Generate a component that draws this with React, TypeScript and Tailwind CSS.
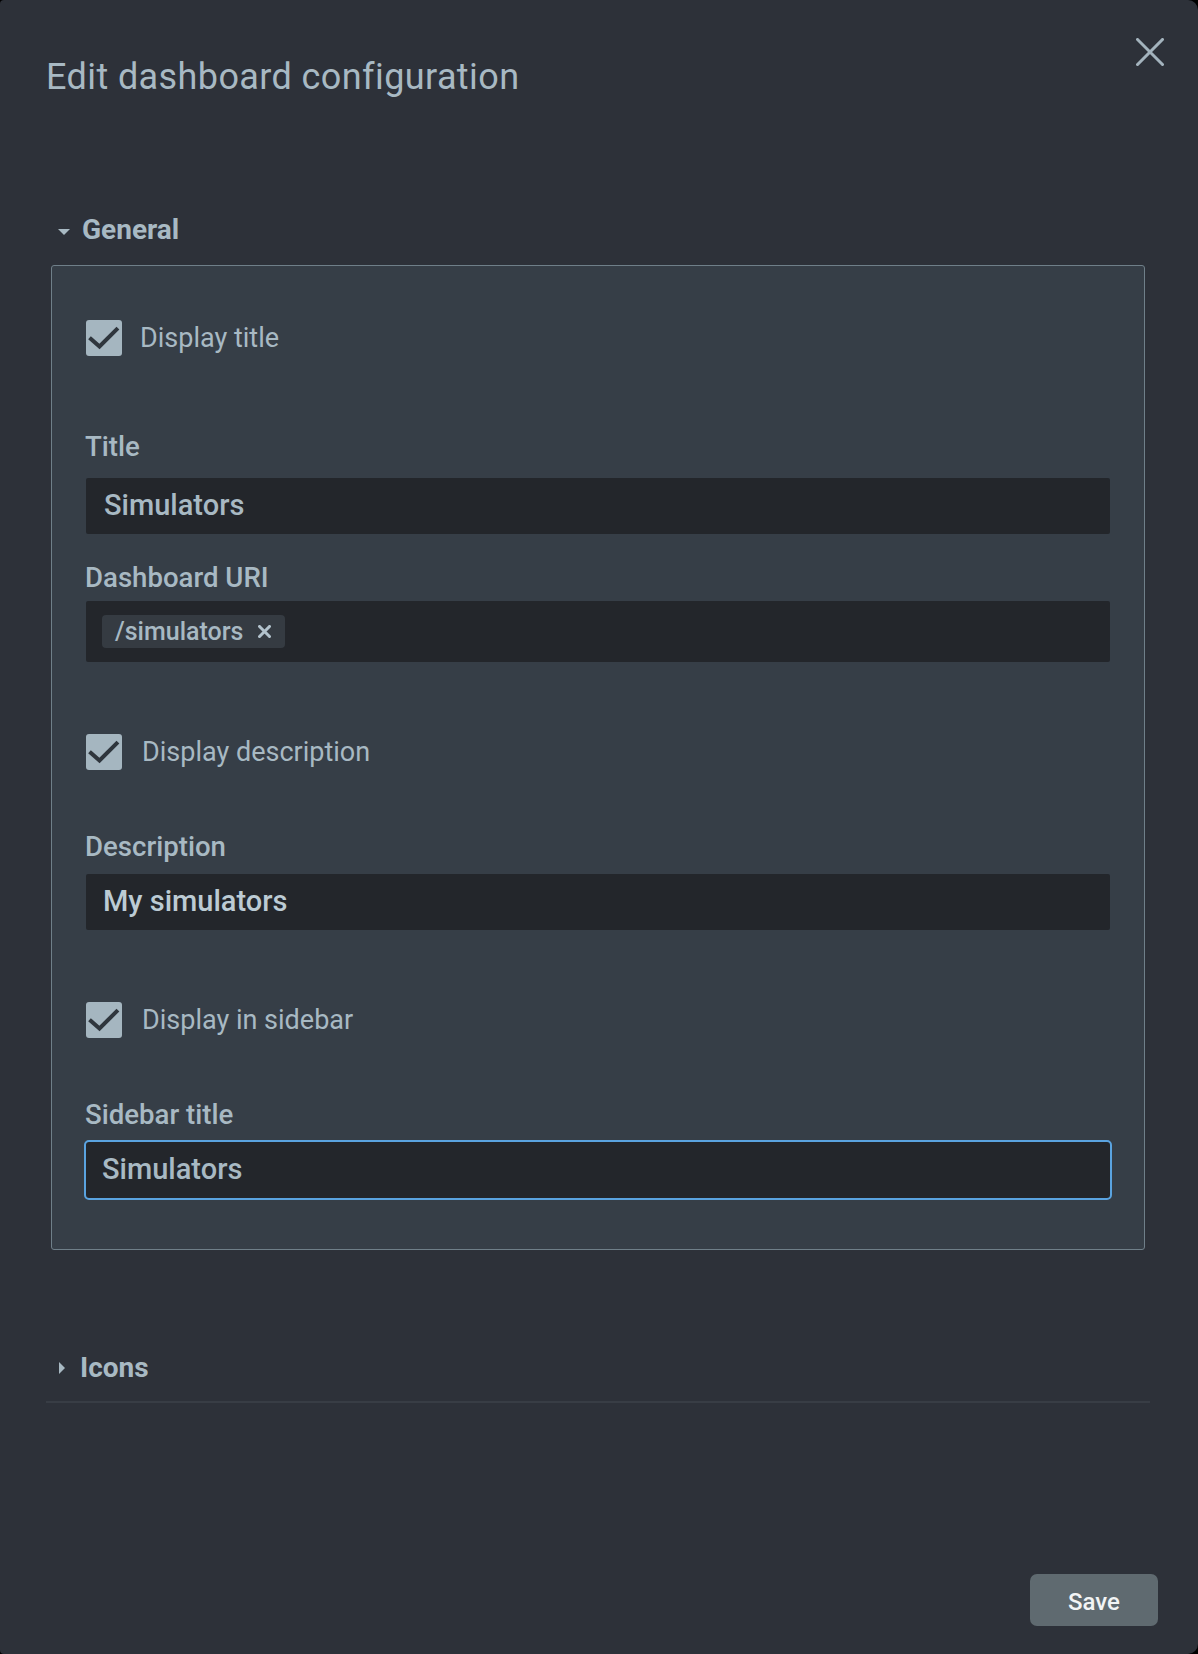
import React from "react";

const TEXT = "text-[#a8b9c3]";

function Check() {
  return (
    <div className="w-[36px] h-[36px] rounded-[3px] bg-[#a5b6c0] flex items-center justify-center shrink-0">
      <svg width="36" height="36" viewBox="0 0 36 36">
        <polyline points="5,19 13.5,26.5 30.5,9.5" fill="none" stroke="#2f363d" strokeWidth="4" strokeLinecap="square" />
      </svg>
    </div>
  );
}

function CheckRow({ label, mt, labelMl }: { label: string; mt: string; labelMl: string }) {
  return (
    <div className={`flex items-center h-[36px] ${mt}`}>
      <Check />
      <span className={`${labelMl} text-[27px] leading-[34px] font-normal ${TEXT}`}>{label}</span>
    </div>
  );
}

function Label({ text, mt }: { text: string; mt: string }) {
  return (
    <div className={`h-[34px] flex items-center text-[27.6px] leading-[34px] font-medium ${TEXT} ${mt} -ml-[1px]`}>
      {text}
    </div>
  );
}

export default function App() {
  return (
    <div className="w-[1198px] h-[1654px] bg-black" style={{ fontFamily: "Roboto, 'Noto Sans', sans-serif" }}>
      <div className="w-full h-full bg-[#2d3139] rounded-tl-[4px] rounded-bl-[4px] rounded-tr-[10px] rounded-br-[10px] pl-[46px] pr-[48px] pb-[28px] flex flex-col">
        {/* Header */}
        <div className="flex justify-between items-start">
          <h1 className={`mt-[56px] text-[36px] leading-[42px] tracking-[0.4px] font-normal ${TEXT}`}>
            Edit dashboard configuration
          </h1>
          <button className="mt-[38px] -mr-[14px] w-[28px] h-[28px]">
            <svg width="28" height="28" viewBox="0 0 28 28">
              <path d="M1.5 1.5 L26.5 26.5 M26.5 1.5 L1.5 26.5" stroke="#a3b3bd" strokeWidth="3" strokeLinecap="square" />
            </svg>
          </button>
        </div>

        {/* General */}
        <div className="mt-[115px] h-[34px] flex items-center">
          <svg className="ml-[12px] mt-[3px]" width="12" height="6" viewBox="0 0 12 6">
            <polygon points="0,0 12,0 6,6" fill="#a8b9c3" />
          </svg>
          <span className={`ml-[12px] text-[28px] leading-[34px] font-bold ${TEXT}`}>General</span>
        </div>

        {/* Panel */}
        <div className="mt-[18px] mx-[5px] border border-[#6f7f89] rounded-[3px] bg-[#363e47] px-[34px] pb-[51px] flex flex-col">
          <CheckRow label="Display title" mt="mt-[54px]" labelMl="ml-[18px]" />

          <Label text="Title" mt="mt-[74px]" />
          <div className={`mt-[14px] h-[56px] bg-[#23262b] rounded-[2px] flex items-center pl-[18px] text-[29px] font-medium ${TEXT}`}>
            Simulators
          </div>

          <Label text="Dashboard URI" mt="mt-[27px]" />
          <div className="mt-[6px] h-[61px] bg-[#23262b] rounded-[2px] flex items-center pl-[16px]">
            <div className="h-[33px] rounded-[4px] bg-[#353b42] flex items-center pl-[13px] pr-[14px]">
              <span className={`text-[25px] leading-[28px] font-medium ${TEXT}`}>/simulators</span>
              <svg className="ml-[15px]" width="13" height="13" viewBox="0 0 13 13">
                <path d="M1.5 1.5 L11.5 11.5 M11.5 1.5 L1.5 11.5" stroke="#b2c2cc" strokeWidth="3" strokeLinecap="square" />
              </svg>
            </div>
          </div>

          <CheckRow label="Display description" mt="mt-[72px]" labelMl="ml-[20px]" />

          <Label text="Description" mt="mt-[60px]" />
          <div className="mt-[10px] h-[56px] bg-[#23262b] rounded-[2px] flex items-center pl-[17px] text-[29px] font-medium text-[#bccbd4]">
            My simulators
          </div>

          <CheckRow label="Display in sidebar" mt="mt-[72px]" labelMl="ml-[20px]" />

          <Label text="Sidebar title" mt="mt-[60px]" />
          <div className={`mt-[10px] h-[56px] bg-[#23262b] rounded-[3px] outline-2 outline-[#5aa3e0] flex items-center pl-[16px] text-[29px] font-medium ${TEXT}`}>
            Simulators
          </div>
        </div>

        {/* Icons */}
        <div className="mt-[101px] h-[34px] flex items-center">
          <svg className="ml-[13px]" width="6" height="12" viewBox="0 0 6 12">
            <polygon points="0,0 6,6 0,12" fill="#a8b9c3" />
          </svg>
          <span className={`ml-[15px] text-[28px] leading-[34px] font-bold ${TEXT}`}>Icons</span>
        </div>
        <div className="mt-[16px] h-[2px] bg-[#383d45]" />

        <div className="flex-1" />
        <div className="flex justify-end">
          <button className="-mr-[8px] w-[128px] h-[52px] pt-[3px] rounded-[7px] bg-[#5f6a70] text-[24px] font-medium text-[#f2f4f5]">
            Save
          </button>
        </div>
      </div>
    </div>
  );
}
